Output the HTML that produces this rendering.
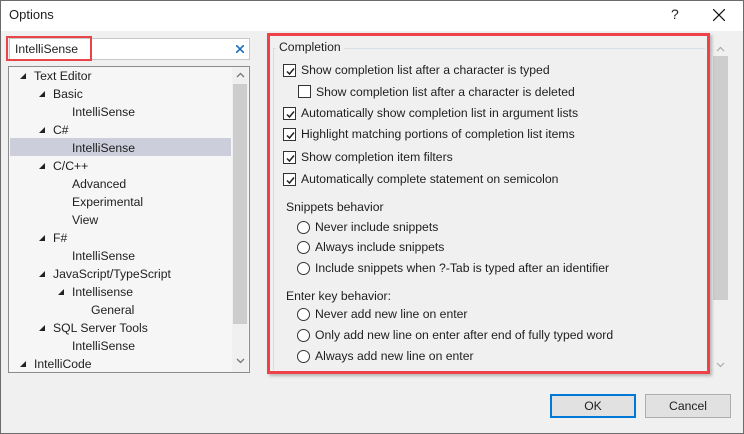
<!DOCTYPE html>
<html><head><style>
*{margin:0;padding:0;box-sizing:border-box}
body{width:744px;height:434px;background:#f0f0f0;font-family:"Liberation Sans","Noto Sans CJK KR",sans-serif;font-size:12.2px;color:#1e1e1e;position:relative;overflow:hidden}
.a{position:absolute;white-space:nowrap;line-height:16px}
.win{position:absolute;left:0;top:0;width:744px;height:434px;border:1px solid #6b6b6b}
.cb{position:absolute;width:13px;height:13px;border:1px solid #333;background:#fff}
.cb svg{position:absolute;left:1px;top:1px}
.rd{position:absolute;width:13px;height:13px;border:1px solid #333;border-radius:50%;background:#fff}
.tri{position:absolute;width:0;height:0;border-left:6px solid transparent;border-bottom:6px solid #222}
.btn{position:absolute;height:24px;background:#e1e1e1;border:1px solid #adadad;text-align:center;line-height:22px}
</style></head><body>
<div style="position:absolute;left:0;top:0;width:744px;height:31px;background:#fff"></div>
<div class="a" style="left:9px;top:7px;font-size:13px">Options</div>
<div class="a" style="left:671px;top:6px;font-size:14px">?</div>
<svg style="position:absolute;left:713px;top:9px" width="12" height="12"><path d="M0 0L12 12M12 0L0 12" stroke="#111" stroke-width="1.2"/></svg>

<div style="position:absolute;left:9px;top:38px;width:241px;height:22px;background:#fff;border:1px solid #c8c8c8"></div>
<div style="position:absolute;left:6px;top:36px;width:86px;height:25px;border:2px solid #e8454a"></div>
<div class="a" style="left:15px;top:41px">IntelliSense</div>
<svg style="position:absolute;left:236px;top:45px" width="8" height="8"><path d="M0 0L8 8M8 0L0 8" stroke="#1a6fc4" stroke-width="1.6"/></svg>

<div style="position:absolute;left:8px;top:66px;width:242px;height:307px;background:#f6f6f6;border:1px solid #8c8c8c"></div>
<div style="position:absolute;left:232px;top:67px;width:16px;height:305px;background:#f0f0f0"></div>
<div style="position:absolute;left:233px;top:84px;width:14px;height:240px;background:#cdcdcd"></div>
<svg style="position:absolute;left:236px;top:72px" width="9" height="6"><path d="M1 5L4.5 1.5L8 5" stroke="#777" fill="none" stroke-width="1.3"/></svg>
<svg style="position:absolute;left:236px;top:358px" width="9" height="6"><path d="M1 1L4.5 4.5L8 1" stroke="#777" fill="none" stroke-width="1.3"/></svg>
<div style="position:absolute;left:10px;top:138px;width:221px;height:18px;background:#cccedb"></div>
<div class="tri" style="left:20px;top:73px"></div><div class="a" style="left:34px;top:68px">Text Editor</div>
<div class="tri" style="left:39px;top:91px"></div><div class="a" style="left:53px;top:86px">Basic</div>
<div class="a" style="left:72px;top:104px">IntelliSense</div>
<div class="tri" style="left:39px;top:127px"></div><div class="a" style="left:53px;top:122px">C#</div>
<div class="a" style="left:72px;top:140px">IntelliSense</div>
<div class="tri" style="left:39px;top:163px"></div><div class="a" style="left:53px;top:158px">C/C++</div>
<div class="a" style="left:72px;top:176px">Advanced</div>
<div class="a" style="left:72px;top:194px">Experimental</div>
<div class="a" style="left:72px;top:212px">View</div>
<div class="tri" style="left:39px;top:235px"></div><div class="a" style="left:53px;top:230px">F#</div>
<div class="a" style="left:72px;top:248px">IntelliSense</div>
<div class="tri" style="left:39px;top:271px"></div><div class="a" style="left:53px;top:266px">JavaScript/TypeScript</div>
<div class="tri" style="left:58px;top:289px"></div><div class="a" style="left:72px;top:284px">Intellisense</div>
<div class="a" style="left:91px;top:302px">General</div>
<div class="tri" style="left:39px;top:325px"></div><div class="a" style="left:53px;top:320px">SQL Server Tools</div>
<div class="a" style="left:72px;top:338px">IntelliSense</div>
<div class="tri" style="left:20px;top:361px"></div><div class="a" style="left:34px;top:356px">IntelliCode</div>

<div style="position:absolute;left:712px;top:40px;width:17px;height:332px;background:#f0f0f0"></div>
<div style="position:absolute;left:713px;top:56px;width:15px;height:244px;background:#cdcdcd"></div>
<svg style="position:absolute;left:716px;top:46px" width="9" height="6"><path d="M1 5L4.5 1.5L8 5" stroke="#aaa" fill="none" stroke-width="1.2"/></svg>
<svg style="position:absolute;left:716px;top:362px" width="9" height="6"><path d="M1 1L4.5 4.5L8 1" stroke="#aaa" fill="none" stroke-width="1.2"/></svg>

<div style="position:absolute;left:273px;top:48px;width:432px;height:1px;background:#d5dfe5"></div>
<div style="position:absolute;left:273px;top:48px;width:1px;height:322px;background:#dcdcdc"></div>
<div class="a" style="left:276px;top:39px;background:#f0f0f0;padding:0 3px">Completion</div>

<div class="cb" style="left:283px;top:64px"><svg width="11" height="11"><path d="M2 5.5L4.5 8L9 2.5" stroke="#222" fill="none" stroke-width="1.5"/></svg></div>
<div class="a" style="left:301px;top:62px">Show completion list after a character is typed</div>
<div class="cb" style="left:298px;top:85px"></div>
<div class="a" style="left:316px;top:84px">Show completion list after a character is deleted</div>
<div class="cb" style="left:283px;top:107px"><svg width="11" height="11"><path d="M2 5.5L4.5 8L9 2.5" stroke="#222" fill="none" stroke-width="1.5"/></svg></div>
<div class="a" style="left:301px;top:105px">Automatically show completion list in argument lists</div>
<div class="cb" style="left:283px;top:128px"><svg width="11" height="11"><path d="M2 5.5L4.5 8L9 2.5" stroke="#222" fill="none" stroke-width="1.5"/></svg></div>
<div class="a" style="left:301px;top:126px">Highlight matching portions of completion list items</div>
<div class="cb" style="left:283px;top:151px"><svg width="11" height="11"><path d="M2 5.5L4.5 8L9 2.5" stroke="#222" fill="none" stroke-width="1.5"/></svg></div>
<div class="a" style="left:301px;top:149px">Show completion item filters</div>
<div class="cb" style="left:283px;top:173px"><svg width="11" height="11"><path d="M2 5.5L4.5 8L9 2.5" stroke="#222" fill="none" stroke-width="1.5"/></svg></div>
<div class="a" style="left:301px;top:171px">Automatically complete statement on semicolon</div>

<div class="a" style="left:286px;top:199px">Snippets behavior</div>
<div class="rd" style="left:297px;top:221px"></div><div class="a" style="left:315px;top:219px">Never include snippets</div>
<div class="rd" style="left:297px;top:241px"></div><div class="a" style="left:315px;top:239px">Always include snippets</div>
<div class="rd" style="left:297px;top:262px"></div><div class="a" style="left:315px;top:260px">Include snippets when ?-Tab is typed after an identifier</div>

<div class="a" style="left:286px;top:288px">Enter key behavior:</div>
<div class="rd" style="left:297px;top:308px"></div><div class="a" style="left:315px;top:306px">Never add new line on enter</div>
<div class="rd" style="left:297px;top:329px"></div><div class="a" style="left:315px;top:327px">Only add new line on enter after end of fully typed word</div>
<div class="rd" style="left:297px;top:350px"></div><div class="a" style="left:315px;top:348px">Always add new line on enter</div>

<div style="position:absolute;left:267px;top:33px;width:443px;height:341px;border:3px solid #ee4248;box-shadow:2px 2px 3px rgba(0,0,0,.25)"></div>

<div class="btn" style="left:550px;top:394px;width:86px;border:2px solid #0078d7;line-height:20px">OK</div>
<div class="btn" style="left:645px;top:394px;width:86px">Cancel</div>
<div class="win"></div>
</body></html>
